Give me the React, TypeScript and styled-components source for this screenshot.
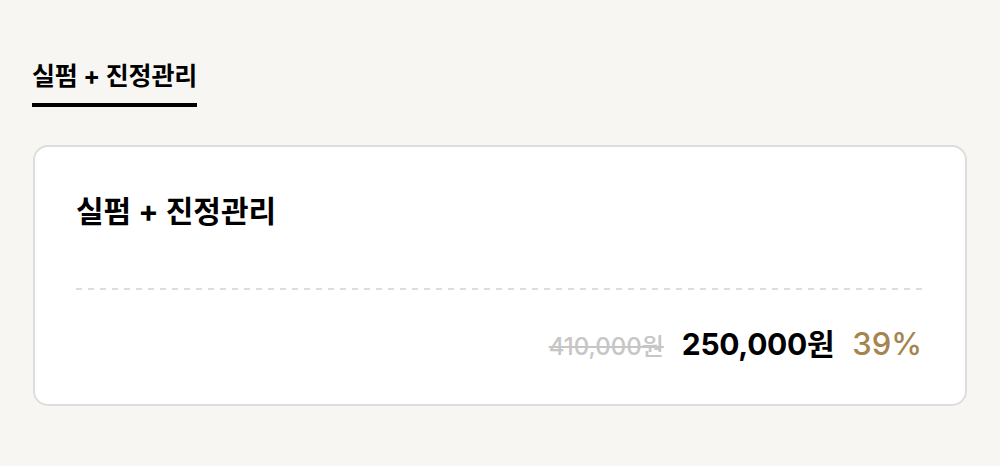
import React from 'react'
import styled, { createGlobalStyle } from 'styled-components'

const GlobalStyle = createGlobalStyle`
  html, body {
    margin: 0;
    padding: 0;
    background: #f7f6f2;
    font-family: Inter, "Noto Sans CJK KR", sans-serif;
    color: #000;
  }
`

const product = {
  name: '실펌 + 진정관리',
  originalPrice: '410,000원',
  price: '250,000원',
  discount: '39%',
}

const App: React.FC = () => {
  return (
    <>
      <GlobalStyle />
      <Page>
        <TabBar>
          <Tab>{product.name}</Tab>
        </TabBar>
        <Card>
          <CardTitle>{product.name}</CardTitle>
          <Divider />
          <PriceRow>
            <OriginalPrice>{product.originalPrice}</OriginalPrice>
            <Price>{product.price}</Price>
            <Discount>{product.discount}</Discount>
          </PriceRow>
        </Card>
      </Page>
    </>
  )
}

export default App

const Page = styled.div`
  width: 1000px;
  height: 466px;
  box-sizing: border-box;
  padding: 59px 33px 0 33px;
`

const TabBar = styled.div`
  display: flex;
  margin-bottom: 38px;
`

const Tab = styled.div`
  padding-bottom: 10px;
  margin-left: -1px;
  border-bottom: 4px solid #000;
  font-size: 25px;
  font-weight: 700;
  line-height: 34px;
  letter-spacing: -0.2px;
`

const Card = styled.div`
  display: flex;
  flex-direction: column;
  box-sizing: border-box;
  width: 934px;
  height: 261px;
  padding: 44px 41px 0 41px;
  background: #fff;
  border: 2px solid #dedddb;
  border-radius: 15px;
`

const CardTitle = styled.div`
  font-size: 30px;
  font-weight: 700;
  line-height: 40px;
`

const Divider = styled.div`
  height: 2px;
  margin-top: 57px;
  background: repeating-linear-gradient(to right, #dcdcdc 0 6px, transparent 6px 12px);
`

const PriceRow = styled.div`
  display: flex;
  justify-content: flex-end;
  align-items: baseline;
  gap: 18px;
  margin-top: 36px;
  padding-right: 2px;
  line-height: 36px;
`

const OriginalPrice = styled.span`
  font-size: 24px;
  font-weight: 500;
  color: #c6c6c6;
  text-decoration: line-through;
`

const Price = styled.span`
  font-size: 30px;
  font-weight: 700;
  letter-spacing: -0.3px;
`

const Discount = styled.span`
  font-size: 31px;
  font-weight: 500;
  color: #a4844f;
`
